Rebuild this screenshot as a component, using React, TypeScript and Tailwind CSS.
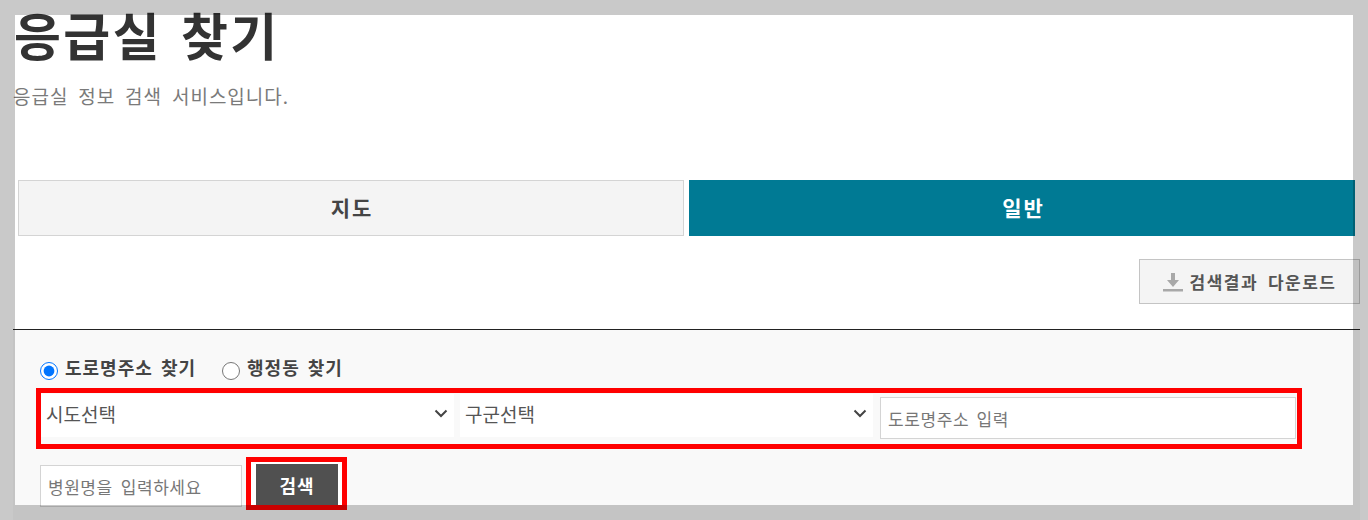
import React from "react";

const font = { fontFamily: '"Noto Sans CJK KR", "Noto Sans", sans-serif' };

function Chevron() {
  return (
    <svg width="14" height="9" viewBox="0 0 14 9" fill="none" stroke="#444" strokeWidth="2">
      <path d="M1.5 1.5 L7 7 L12.5 1.5" />
    </svg>
  );
}

function SelectBox({ label }: { label: string }) {
  return (
    <div className="flex h-[43px] w-[413px] items-start justify-between bg-white pl-[5px] pr-[6px] pt-[6px] text-[19px] leading-[28px] text-[#555]">
      <span>{label}</span>
      <span className="mt-[9px]"><Chevron /></span>
    </div>
  );
}

export default function App() {
  return (
    <div style={font} className="relative h-[520px] w-[1368px] overflow-hidden bg-white">
      <div className="ml-[13px] w-[1347px]">
        <h1 className="h-[71px] pl-px pt-[6px] text-[51px] font-bold leading-[56px] tracking-[2.4px] [word-spacing:5px] text-[#333]">응급실 찾기</h1>
        <p className="h-[109px] pt-[11px] text-[19px] leading-[28px] tracking-[1px] [word-spacing:4.6px] text-[#7a7a7a]">응급실 정보 검색 서비스입니다.</p>

        <div className="ml-[5px] flex w-[1337px] gap-[5px]">
          <div className="flex h-[56px] w-[666px] items-center justify-center border border-[#d4d4d4] bg-[#f4f4f4] pl-[2px] text-[21px] font-bold tracking-[2px] text-[#444]">지도</div>
          <div className="flex h-[56px] w-[666px] items-center justify-center bg-[#007a94] pl-[3px] text-[21px] font-bold tracking-[2px] text-white">일반</div>
        </div>

        <div className="mt-[23px] flex justify-end">
          <div className="flex h-[45px] w-[221px] items-center justify-center gap-[7px] border border-[#c4c4c4] bg-[#f4f4f4] text-[17px] font-bold tracking-[1.5px] [word-spacing:4.5px] text-[#555]">
            <svg width="20" height="20" viewBox="0 0 20 20" fill="#a8a8a8">
              <path d="M8 1h4v7h4l-6 7-6-7h4z" />
              <rect x="0" y="17" width="20" height="2.5" />
            </svg>
            <span>검색결과 다운로드</span>
          </div>
        </div>

        <div className="mt-[25px] h-[200px] border-t border-[#222] bg-[#f9f9f9] pt-[25px]">
          <div className="ml-[27px] flex h-[29px] items-center text-[18px] font-bold tracking-[1px] [word-spacing:3px] text-[#444]">
            <label className="flex items-center gap-[7px]">
              <input type="radio" name="kind" defaultChecked className="mt-[3px] h-[18px] w-[18px]" />
              <span className="-mt-[4px]">도로명주소 찾기</span>
            </label>
            <label className="ml-[26px] flex items-center gap-[7px]">
              <input type="radio" name="kind" className="mt-[3px] h-[18px] w-[18px]" />
              <span className="-mt-[4px]">행정동 찾기</span>
            </label>
          </div>

          <div className="ml-[23px] mt-[4px] flex h-[61px] w-[1266px] gap-[6px] border-[5px] border-[#f00] pt-px">
            <SelectBox label="시도선택" />
            <SelectBox label="구군선택" />
            <input
              readOnly
              placeholder="도로명주소 입력"
              className="ml-px mt-[3px] h-[42px] w-[416px] border border-[#d4d4d4] bg-white px-[7px] pt-px text-[17px] tracking-[0.6px] [word-spacing:3px] text-[#555] placeholder:text-[#777]"
            />
          </div>

          <div className="ml-[27px] mt-[8px] flex items-start">
            <input
              readOnly
              placeholder="병원명을 입력하세요"
              className="mt-[8px] h-[42px] w-[202px] border border-[#d4d4d4] bg-white px-[7px] text-[17px] tracking-[0.5px] [word-spacing:4px] placeholder:text-[#777]"
            />
            <div className="ml-[4px] h-[53px] w-[101px] overflow-hidden border-[5px] border-[#f00] bg-white px-[5px] pt-[2px]">
              <div className="flex h-[41px] w-[82px] items-start justify-center bg-[#505050] pt-[7px] text-[18px] font-bold leading-[28px] tracking-[1px] text-white">검색</div>
            </div>
          </div>
        </div>
      </div>

      <div className="pointer-events-none absolute inset-0 border-[15px] border-[rgba(0,0,0,0.21)]" />
    </div>
  );
}
